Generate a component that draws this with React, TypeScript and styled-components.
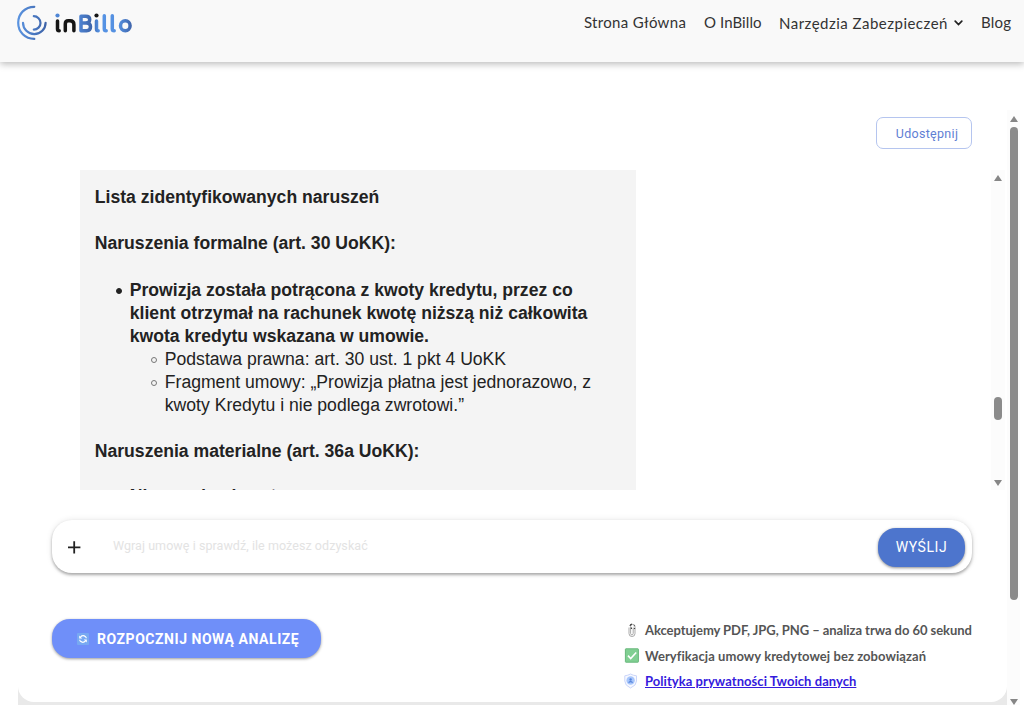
import React from 'react';
import styled, { createGlobalStyle } from 'styled-components';

const GlobalStyle = createGlobalStyle`
  * { box-sizing: border-box; }
  body { margin: 0; background: #fff; font-family: Roboto, sans-serif; overflow: hidden; }
`;

const Page = styled.div`
  height: 705px;
  display: flex;
  flex-direction: column;
  overflow: hidden;
`;

const Header = styled.header`
  height: 62px;
  flex: none;
  display: flex;
  justify-content: space-between;
  align-items: flex-start;
  padding: 5px 12px 0 16px;
  background: #f9f9f9;
  box-shadow: 0 2px 7px rgba(0, 0, 0, 0.28);
`;

const Nav = styled.nav`
  display: flex;
  gap: 18px;
  padding-top: 7px;
`;

const NavLink = styled.a<{ $width: number; $spacing: number; $drop?: number }>`
  display: flex;
  align-items: center;
  justify-content: space-between;
  width: ${(p) => p.$width}px;
  height: 20px;
  margin-top: ${(p) => p.$drop ?? 0}px;
  white-space: nowrap;
  font: 400 15px/20px Lato, sans-serif;
  letter-spacing: ${(p) => p.$spacing}px;
  color: #333;
`;

const Main = styled.main`
  flex: 1;
  display: flex;
  min-height: 0;
  padding: 48px 4px 0 18px;
`;

const Frame = styled.div`
  flex: 1;
  background: linear-gradient(#fff 90%, #e9e9e9 98%);
`;

const Card = styled.section`
  height: 592px;
  padding: 7px 0 0 34px;
  border-radius: 0 0 16px 16px;
  background: #fff;
`;

const ShareButton = styled.button`
  display: block;
  width: 96px;
  height: 32px;
  margin: 0 35px 0 auto;
  padding: 0 0 0 6px;
  border: 1px solid #b5c5ef;
  border-radius: 7px;
  background: #fff;
  color: #5f80d4;
  font: 400 12.5px Roboto, sans-serif;
  letter-spacing: 0.3px;
`;

const Chat = styled.div`
  display: flex;
  justify-content: space-between;
  height: 320px;
  margin-top: 21px;
  padding: 0 2px 0 28.4px;
`;

const Message = styled.article`
  width: 556px;
  height: 320.4px;
  padding: 16px 14.4px;
  overflow: hidden;
  background: #f4f4f4;
  color: #222;
  font: 400 17.6px/23px "Liberation Sans", sans-serif;
`;

const Heading = styled.h3<{ $after?: number }>`
  margin: 0 0 ${(p) => p.$after ?? 23}px;
  font: inherit;
  font-weight: 700;
`;

const Bullets = styled.ul<{ $hollow?: boolean; $after?: number }>`
  margin: 0 0 ${(p) => p.$after ?? 0}px;
  padding-left: 35px;
  list-style: none;

  > li::before {
    content: '';
    display: inline-block;
    box-sizing: border-box;
    width: 6px;
    height: 6px;
    margin: 0 8px 0 -14px;
    vertical-align: 2px;
    border: 1px solid ${(p) => (p.$hollow ? '#777' : '#222')};
    border-radius: 50%;
    background: ${(p) => (p.$hollow ? 'transparent' : '#222')};
  }
`;

const Track = styled.div<{ $width: number; $height: number }>`
  width: ${(p) => p.$width}px;
  height: ${(p) => p.$height}px;
  flex: none;
  display: flex;
  flex-direction: column;
  align-items: center;
  background: #fcfcfc;
`;

const Arrow = styled.i<{ $down?: boolean; $inset: number }>`
  margin: ${(p) => (p.$down ? `auto 0 ${p.$inset}px` : `${p.$inset}px 0 0`)};
  border: 4px solid transparent;
  border-top: ${(p) => (p.$down ? '6px solid #868686' : '0')};
  border-bottom: ${(p) => (p.$down ? '0' : '6px solid #868686')};
`;

const Thumb = styled.div<{ $height: number; $top: number }>`
  width: 8px;
  height: ${(p) => p.$height}px;
  flex: none;
  margin-top: ${(p) => p.$top}px;
  border-radius: 4px;
  background: #8b8b8b;
`;

const Prompt = styled.form`
  width: 920px;
  height: 53px;
  margin-top: 30px;
  padding: 1px 7px 0 16px;
  display: flex;
  align-items: center;
  border-radius: 20px;
  background: #fff;
  box-shadow: 0 2px 3px rgba(0, 0, 0, 0.3), 0 0 6px rgba(0, 0, 0, 0.1);
`;

const Placeholder = styled.span`
  flex: 1;
  margin: -4px 0 0 32px;
  color: #e3e3e3;
  font-size: 12.5px;
  letter-spacing: 0.06px;
`;

const SendButton = styled.button`
  width: 87px;
  height: 39px;
  padding: 0;
  border: 0;
  border-radius: 18px;
  background: #4d75cd;
  box-shadow: 0 1px 3px rgba(0, 0, 0, 0.45);
  color: #fff;
  font: 400 14px Roboto, sans-serif;
  letter-spacing: 0.6px;
`;

const Footer = styled.footer`
  display: flex;
  justify-content: space-between;
  margin-top: 46px;
  padding-right: 35px;
`;

const RestartButton = styled.button`
  width: 269px;
  height: 39px;
  padding: 0 0 0 25px;
  display: flex;
  align-items: center;
  gap: 8px;
  border: 0;
  border-radius: 18px;
  background: #6f8ff9;
  box-shadow: 0 1px 3px rgba(0, 0, 0, 0.4);
  color: #fff;
  font: 700 14px Roboto, sans-serif;
  letter-spacing: 0.54px;
  white-space: nowrap;
`;

const Notes = styled.ul`
  width: 348px;
  margin: -1px 0 0;
  padding: 0;
  list-style: none;
`;

const Note = styled.li<{ $height: number; $spacing: number }>`
  height: ${(p) => p.$height}px;
  display: flex;
  align-items: center;
  white-space: nowrap;
  color: #555;
  font: 700 13px/20px Lato, sans-serif;
  letter-spacing: ${(p) => p.$spacing}px;
  svg { flex: none; margin-right: 6px; }
  a { color: #351bdd; text-decoration: underline; }
`;

const Logo = () => (
  <svg width="118" height="36" viewBox="0 0 118 36" role="img" aria-label="inBillo">
    <defs>
      <linearGradient id="ring" gradientUnits="userSpaceOnUse" x1="1" y1="0" x2="31" y2="0">
        <stop offset="0" stopColor="#5b95e2" />
        <stop offset="1" stopColor="#3c61a6" />
      </linearGradient>
      <linearGradient id="word" gradientUnits="userSpaceOnUse" x1="62" y1="0" x2="116" y2="0">
        <stop offset="0" stopColor="#4f86d6" />
        <stop offset=".25" stopColor="#3f66ab" />
        <stop offset=".4" stopColor="#5593e5" />
        <stop offset=".75" stopColor="#5590e0" />
        <stop offset="1" stopColor="#3f64aa" />
      </linearGradient>
    </defs>
    <g fill="none" stroke="url(#ring)" strokeWidth="2.2" strokeLinecap="round">
      <path d="M18.300 1.800C9 1.800 2.200 8.600 2.200 17.800S9 33.900 18.300 33.900" />
      <path d="M7 17.800a11.300 11.300 0 0 0 22.600 0" />
      <path d="M17.800 11.200a6.700 6.700 0 0 1 0 13.400" />
    </g>
    <g fill="none" strokeWidth="3.500" strokeLinecap="round" strokeLinejoin="round">
      <g stroke="#151515">
        <path d="M41.500 16v8q0 1.800 1.700 1.800M49.300 25.800V19q0-3.200 3-3.200h1.700q3.900 0 3.900 3.800v6.200" />
      </g>
      <g stroke="url(#word)">
        <path d="M65 11.300h4.700q4 0 4 3.300t-4 3.300H65h5.500q4 0 4 3.900t-4 4H65z" />
        <path d="M80.500 16v8q0 1.800 1.700 1.800M88.300 10.700v13q0 2.100 1.900 2.100M96.300 10.700v13q0 2.100 1.900 2.100" />
        <ellipse cx="109.300" cy="20.800" rx="4.800" ry="5" />
      </g>
    </g>
    <circle cx="41.500" cy="10.500" r="2.100" fill="#4f86d6" />
    <circle cx="80.500" cy="10.500" r="2.100" fill="#151515" />
  </svg>
);

const Chevron = () => (
  <svg width="9" height="6" viewBox="0 0 9 6">
    <path d="M1.2 1.2 4.5 4.5 7.8 1.2" fill="none" stroke="#222" strokeWidth="1.7" strokeLinecap="round" />
  </svg>
);

const Plus = () => (
  <svg width="13" height="13" viewBox="0 0 13 13">
    <path d="M6.2 .2v12.400M0 6.400h12.400" stroke="#222" strokeWidth="1.800" />
  </svg>
);

const Refresh = () => (
  <svg width="12" height="12" viewBox="0 0 12 12">
    <rect width="12" height="12" rx="1" fill="#77a9f2" />
    <path d="M2.200 2.600v3h3z M9.800 9.400v-3h-3z" fill="#fff" />
    <path d="M3.500 4Q6 1.600 8.500 3.700q.7.700.8 1.600M8.500 8Q6 10.400 3.500 8.300q-.7-.7-.8-1.600" fill="none" stroke="#fff" strokeWidth="1.200" />
  </svg>
);

const Clip = () => (
  <svg width="15" height="15" viewBox="0 0 15 15">
    <path d="M5 4.500v6a3 3 0 0 0 6 0V3.500a2.200 2.200 0 0 0-4.400 0v7a1.300 1.300 0 0 0 2.600 0v-6" fill="none" stroke="#a9a9a9" strokeWidth="1" />
    <path d="M6 3q.2-1.700 2-1.900M10.300 2.200v1M7.400 4.500v1.400M10.500 5v1" stroke="#444" strokeWidth="1.200" fill="none" />
  </svg>
);

const Check = () => (
  <svg width="15" height="15" viewBox="0 0 15 15">
    <rect x="1.400" y=".8" width="13" height="13.400" rx=".5" fill="#80cf92" stroke="#69b77c" />
    <path d="m4 7.600 2.700 2.900 5.500-6" fill="none" stroke="#fff" strokeWidth="1.600" />
  </svg>
);

const Shield = () => (
  <svg width="15" height="16" viewBox="0 0 15 16">
    <path d="M6.500 1Q9 2.500 12.500 2.800V8q0 4.500-6 7Q.8 12.500.8 8V2.800Q4 2.500 6.500 1z" fill="#f7f9ff" stroke="#cbd6fa" />
    <circle cx="6.600" cy="7.500" r="4.200" fill="#a8c6fb" />
    <circle cx="6.600" cy="6.500" r="1.200" fill="#5685dc" />
    <path d="M4.600 9.600q2-2 4 0" stroke="#5685dc" strokeWidth="1.200" fill="none" />
  </svg>
);

export default function App() {
  return (
    <Page>
      <GlobalStyle />
      <Header>
        <Logo />
        <Nav>
          <NavLink $width={102} $spacing={0.32}>Strona Główna</NavLink>
          <NavLink $width={57} $spacing={0.08}>O InBillo</NavLink>
          <NavLink $width={184} $spacing={0.48} $drop={1}>Narzędzia Zabezpieczeń<Chevron /></NavLink>
          <NavLink $width={31} $spacing={0.2}>Blog</NavLink>
        </Nav>
      </Header>
      <Main>
        <Frame>
          <Card>
            <ShareButton>Udostępnij</ShareButton>
            <Chat>
              <Message>
                <Heading>Lista zidentyfikowanych naruszeń</Heading>
                <Heading $after={24}>Naruszenia formalne (art. 30 UoKK):</Heading>
                <Bullets $after={23}>
                  <li>
                    <strong>Prowizja została potrącona z kwoty kredytu, przez co klient otrzymał na rachunek kwotę niższą niż całkowita kwota kredytu wskazana w umowie.</strong>
                    <Bullets $hollow>
                      <li>Podstawa prawna: art. 30 ust. 1 pkt 4 UoKK</li>
                      <li>Fragment umowy: „Prowizja płatna jest jednorazowo, z kwoty Kredytu i nie podlega zwrotowi.”</li>
                    </Bullets>
                  </li>
                </Bullets>
                <Heading $after={22}>Naruszenia materialne (art. 36a UoKK):</Heading>
                <Bullets>
                  <li><strong>Niezasadne koszty umowne</strong></li>
                </Bullets>
              </Message>
              <Track $width={14} $height={320}>
                <Arrow $inset={5} />
                <Thumb $height={23} $top={216} />
                <Arrow $down $inset={4} />
              </Track>
            </Chat>
            <Prompt>
              <Plus />
              <Placeholder>Wgraj umowę i sprawdź, ile możesz odzyskać</Placeholder>
              <SendButton type="button">WYŚLIJ</SendButton>
            </Prompt>
            <Footer>
              <RestartButton><Refresh />ROZPOCZNIJ NOWĄ ANALIZĘ</RestartButton>
              <Notes>
                <Note $height={24} $spacing={-0.06}><Clip />Akceptujemy PDF, JPG, PNG – analiza trwa do 60 sekund</Note>
                <Note $height={27} $spacing={0.06}><Check />Weryfikacja umowy kredytowej bez zobowiązań</Note>
                <Note $height={23} $spacing={0.05}><Shield /><a>Polityka prywatności Twoich danych</a></Note>
              </Notes>
            </Footer>
          </Card>
        </Frame>
        <Track $width={13} $height={595}>
          <Arrow $inset={6} />
          <Thumb $height={473} $top={5} />
          <Arrow $down $inset={0} />
        </Track>
      </Main>
    </Page>
  );
}
